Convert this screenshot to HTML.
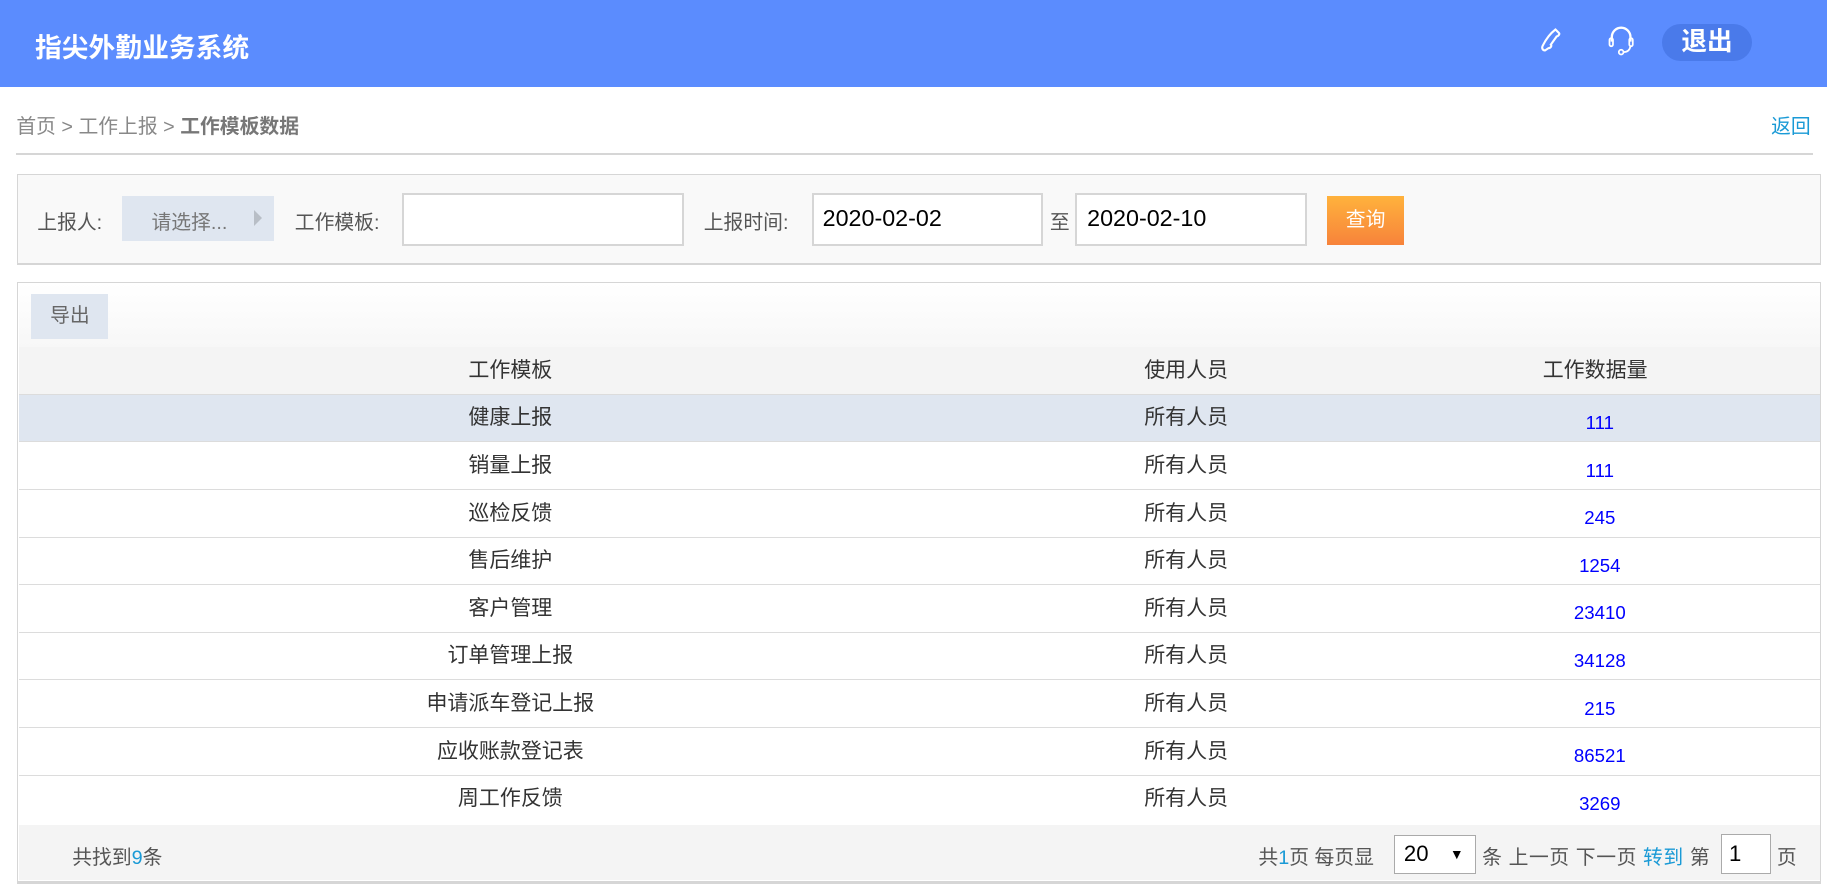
<!DOCTYPE html>
<html><head><meta charset="utf-8"><style>
html{zoom:1.1652}
body{margin:0;width:1568px;height:760px;overflow:hidden;background:#fff;font-family:"Liberation Sans","Noto Sans CJK SC",sans-serif;color:#333;position:relative}
.a{position:absolute}
.hd{left:0;top:0;width:1568px;height:75px;background:#5b8cfe}
.t{font-size:17px;white-space:nowrap}
.inp{background:#fff;border:2px solid #d6d6d6;box-sizing:border-box}
table{border-collapse:collapse;width:1546px;table-layout:fixed}
td{height:40px;border-bottom:1px solid #dcdcdc;text-align:center;font-size:18px;padding:0;line-height:20px}
td.n{color:#0000ff;font-size:16px}
td.n span{position:relative;top:4px;left:4px}
</style></head><body>
<div class="a hd"></div>
<div class="a" style="left:30px;top:22px;font-size:23px;font-weight:bold;color:#fff">指尖外勤业务系统</div>
<svg class="a" style="left:1320px;top:22px" width="24" height="26" viewBox="0 0 24 26"><path d="M15 3 L18 6 C19 7 17 9 16 9 L11 16 C12 17 11 19 9 19 L6 21 C4 21 3 19 4 17 C7 11 11 6 15 3Z" fill="none" stroke="#fff" stroke-width="1.8"/></svg>
<svg class="a" style="left:1378px;top:20px" width="26" height="30" viewBox="0 0 26 30"><path d="M5 16 V12 A8 8 0 0 1 21 12 V16" fill="none" stroke="#fff" stroke-width="2"/><rect x="3" y="13" width="3" height="7" rx="1.5" fill="none" stroke="#fff" stroke-width="1.5"/><rect x="20" y="13" width="3" height="7" rx="1.5" fill="none" stroke="#fff" stroke-width="1.5"/><path d="M21 20 Q20 25 15 25" fill="none" stroke="#fff" stroke-width="1.5"/><circle cx="13" cy="25" r="2" fill="none" stroke="#fff" stroke-width="1.5"/></svg>
<div class="a" style="left:1426px;top:21px;width:78px;height:31px;border-radius:16px;background:#4a7aea;color:#fff;font-weight:bold;font-size:22px;text-align:center;line-height:31px">退出</div>
<div class="a t" style="left:14px;top:94px;color:#888">首页 &gt; 工作上报 &gt; <b style="color:#777">工作模板数据</b></div>
<div class="a t" style="left:1520px;top:94px;color:#1a9ad6">返回</div>
<div class="a" style="left:14px;top:131px;width:1542px;height:2px;background:#d6d6d6"></div>
<div class="a" style="left:15px;top:149px;width:1546px;height:76px;background:#f9f9f9;border:1px solid #d6d6d6;border-bottom-width:2px"></div>
<div class="a t" style="left:32px;top:177px;color:#555">上报人:</div>
<div class="a" style="left:105px;top:168px;width:130px;height:39px;background:#dfe6f0"></div>
<div class="a t" style="left:130px;top:177px;color:#777">请选择...</div>
<div class="a" style="left:218px;top:180px;border-left:7px solid #b8bec6;border-top:7px solid transparent;border-bottom:7px solid transparent"></div>
<div class="a t" style="left:253px;top:177px;color:#555">工作模板:</div>
<div class="a inp" style="left:345px;top:166px;width:242px;height:45px"></div>
<div class="a t" style="left:604px;top:177px;color:#555">上报时间:</div>
<div class="a inp" style="left:697px;top:166px;width:198px;height:45px"></div>
<div class="a" style="left:706px;top:176px;font-size:20px;color:#000">2020-02-02</div>
<div class="a t" style="left:901px;top:177px;color:#555">至</div>
<div class="a inp" style="left:923px;top:166px;width:199px;height:45px"></div>
<div class="a" style="left:933px;top:176px;font-size:20px;color:#000">2020-02-10</div>
<div class="a" style="left:1139px;top:168px;width:66px;height:42px;background:linear-gradient(#ffb23c,#f7833b);color:#fff;font-size:17px;text-align:center;line-height:42px">查询</div>
<div class="a" style="left:15px;top:242px;width:1546px;height:513px;border:1px solid #d6d6d6;border-bottom-width:3px;background:#fff"></div>
<div class="a" style="left:16px;top:243px;width:1546px;height:55px;background:linear-gradient(#fff,#f7f7f7)"></div>
<div class="a" style="left:27px;top:252px;width:66px;height:39px;background:#dfe6f0;color:#666;font-size:17px;text-align:center;line-height:39px">导出</div>
<table class="a" style="left:16px;top:298px">
<colgroup><col style="width:844px"><col style="width:316px"><col></colgroup>
<tr style="background:#f4f4f4"><td>工作模板</td><td>使用人员</td><td>工作数据量</td></tr>
<tr style="background:#dfe6f0"><td>健康上报</td><td>所有人员</td><td class="n"><span>111</span></td></tr>
<tr><td>销量上报</td><td>所有人员</td><td class="n"><span>111</span></td></tr>
<tr><td>巡检反馈</td><td>所有人员</td><td class="n"><span>245</span></td></tr>
<tr><td>售后维护</td><td>所有人员</td><td class="n"><span>1254</span></td></tr>
<tr><td>客户管理</td><td>所有人员</td><td class="n"><span>23410</span></td></tr>
<tr><td>订单管理上报</td><td>所有人员</td><td class="n"><span>34128</span></td></tr>
<tr><td>申请派车登记上报</td><td>所有人员</td><td class="n"><span>215</span></td></tr>
<tr><td>应收账款登记表</td><td>所有人员</td><td class="n"><span>86521</span></td></tr>
<tr><td style="border:0">周工作反馈</td><td style="border:0">所有人员</td><td class="n" style="border:0"><span>3269</span></td></tr>
</table>
<div class="a" style="left:16px;top:708px;width:1546px;height:47px;background:#f4f4f4"></div>
<div class="a t" style="left:62px;top:722px;color:#555">共找到<span style="color:#1a9ad6">9</span>条</div>
<div class="a t" style="left:1080px;top:722px;color:#555">共<span style="color:#1a9ad6">1</span>页 每页显</div>
<div class="a" style="left:1196px;top:717px;width:71px;height:33px;background:#fff;border:1px solid #aaa;box-sizing:border-box;font-size:19px;color:#000;line-height:31px;padding-left:8px">20<span style="font-size:12px;position:absolute;right:10px">▼</span></div>
<div class="a t" style="left:1272px;top:722px;color:#555;letter-spacing:0.5px">条 上一页 下一页 <span style="color:#1a9ad6">转到</span> 第</div>
<div class="a" style="left:1477px;top:716px;width:43px;height:34px;background:#fff;border:1px solid #aaa;box-sizing:border-box;font-size:19px;color:#000;line-height:32px;padding-left:6px">1</div>
<div class="a t" style="left:1525px;top:722px;color:#555">页</div>
</body></html>
